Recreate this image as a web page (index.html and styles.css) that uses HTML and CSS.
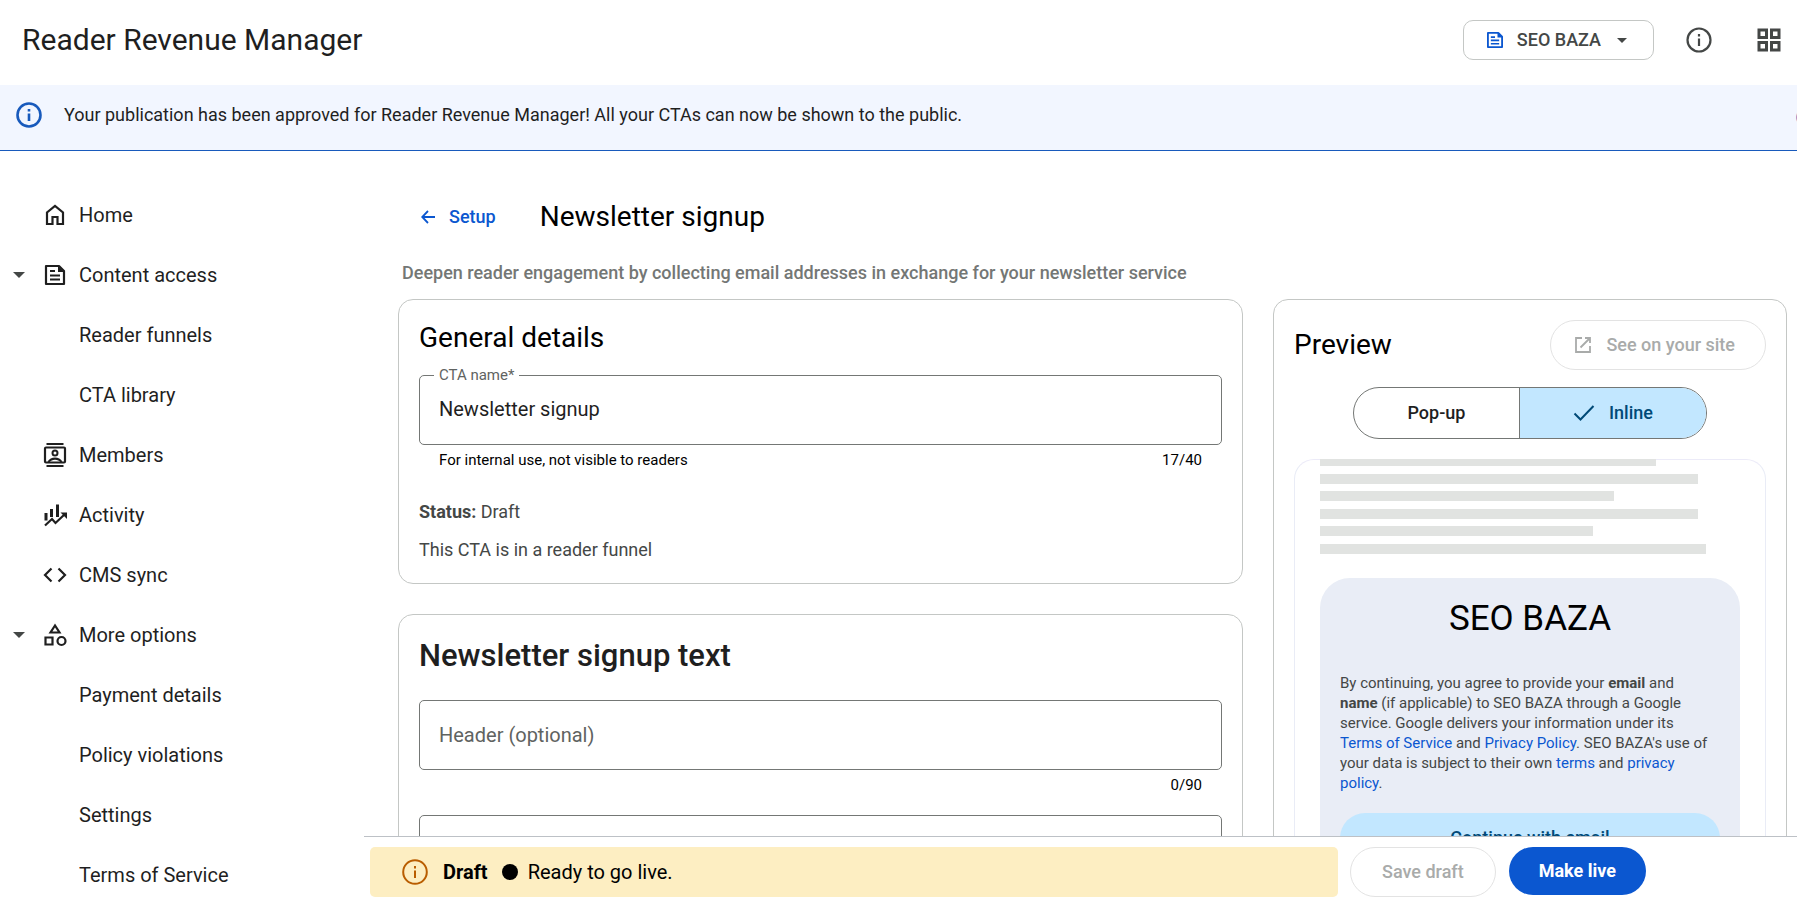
FILE: index.html
```html
<!DOCTYPE html>
<html lang="en">
<head>
<meta charset="utf-8">
<title>Reader Revenue Manager</title>
<link rel="stylesheet" href="styles.css">
</head>
<body>
<header class="topbar">
  <h1 class="topbar-title">Reader Revenue Manager</h1>
  <button class="picker" type="button">
    <svg class="icon-20 blue" viewBox="0 0 24 24"><path d="M3.500 3.500h12.500l4.500 4.500v12.500h-17z" fill="none" stroke="currentColor" stroke-width="2.200" stroke-linejoin="round"/><path d="M15 3v6h6z" fill="currentColor"/><path d="M7 8.500h5M7 12.500h10M7 16.500h10" stroke="currentColor" stroke-width="2"/></svg>
    <span>SEO BAZA</span>
    <svg class="caret-sm" viewBox="0 0 10 5"><path d="M0 0h10L5 5z" fill="currentColor"/></svg>
  </button>
  <button class="icon-button" type="button" aria-label="Information">
    <svg viewBox="0 0 26 26"><circle cx="13" cy="13" r="11.500" fill="none" stroke="currentColor" stroke-width="2.200"/><path d="M13 11.500v7.500M13 7v2.500" stroke="currentColor" stroke-width="2.200"/></svg>
  </button>
  <button class="icon-button" type="button" aria-label="Apps">
    <svg viewBox="0 0 26 26"><path d="M3 3h7.500v7.500H3zM15.500 3H23v7.500h-7.500zM3 15.500h7.500V23H3zM15.500 15.500H23V23h-7.500z" fill="none" stroke="currentColor" stroke-width="3"/></svg>
  </button>
</header>

<div class="banner">
  <svg class="icon-26 banner-icon" viewBox="0 0 26 26"><circle cx="13" cy="13" r="11.500" fill="none" stroke="currentColor" stroke-width="2.600"/><path d="M13 11.500v7.500M13 7v2.600" stroke="currentColor" stroke-width="2.600"/></svg>
  <p class="banner-text">Your publication has been approved for Reader Revenue Manager! All your CTAs can now be shown to the public.</p>
  <button class="banner-action" type="button">Got it</button>
</div>

<div class="body">
  <nav class="nav">
    <a class="nav-item" href="#">
      <span class="nav-caret"></span>
      <svg class="icon-24" viewBox="0 0 24 24"><path d="M4 21V9.500l8-6.500 8 6.500V21h-5.500v-7h-5v7z" fill="none" stroke="currentColor" stroke-width="2.200"/></svg>
      <span>Home</span>
    </a>
    <a class="nav-item" href="#">
      <span class="nav-caret"><svg class="caret" viewBox="0 0 12 6"><path d="M0 0h12L6 6z" fill="currentColor"/></svg></span>
      <svg class="icon-24" viewBox="0 0 24 24"><path d="M3 3h13l5 5v13H3z" fill="none" stroke="currentColor" stroke-width="2.200" stroke-linejoin="round"/><path d="M15 3v6h6z" fill="currentColor"/><path d="M7 8h5M7 12.500h10M7 16.500h10" stroke="currentColor" stroke-width="2"/></svg>
      <span>Content access</span>
    </a>
    <a class="nav-item nav-child" href="#">Reader funnels</a>
    <a class="nav-item nav-child" href="#">CTA library</a>
    <a class="nav-item" href="#">
      <span class="nav-caret"></span>
      <svg class="icon-24" viewBox="0 0 24 24"><path d="M3.500 1h17M3.500 23h17" stroke="currentColor" stroke-width="2"/><rect x="2" y="4.500" width="20" height="15" rx="1" fill="none" stroke="currentColor" stroke-width="2.200"/><circle cx="12" cy="10" r="2.500" fill="none" stroke="currentColor" stroke-width="2"/><path d="M5.500 19c3-4.500 10-4.500 13 0" fill="none" stroke="currentColor" stroke-width="2.200"/></svg>
      <span>Members</span>
    </a>
    <a class="nav-item" href="#">
      <span class="nav-caret"></span>
      <svg class="icon-24" viewBox="0 0 24 24"><path d="M3 10v7.500M8.500 6v8M14.500 1.500V14" stroke="currentColor" stroke-width="3"/><path d="M2 22.500l7-6.500 3.500 4L22 11" fill="none" stroke="currentColor" stroke-width="2.200"/><path d="M17.500 9.500H24V16z" fill="currentColor"/></svg>
      <span>Activity</span>
    </a>
    <a class="nav-item" href="#">
      <span class="nav-caret"></span>
      <svg class="icon-24" viewBox="0 0 24 24"><path d="M8.500 5.500L2 12l6.500 6.500M15.500 5.500L22 12l-6.500 6.500" fill="none" stroke="currentColor" stroke-width="2.200"/></svg>
      <span>CMS sync</span>
    </a>
    <a class="nav-item" href="#">
      <span class="nav-caret"><svg class="caret" viewBox="0 0 12 6"><path d="M0 0h12L6 6z" fill="currentColor"/></svg></span>
      <svg class="icon-24" viewBox="0 0 24 24"><path d="M12 2.500L7.500 9.500h9zM2.500 14.500h7v7h-7z" fill="none" stroke="currentColor" stroke-width="2.200"/><circle cx="18.500" cy="18" r="4" fill="none" stroke="currentColor" stroke-width="2.200"/></svg>
      <span>More options</span>
    </a>
    <a class="nav-item nav-child" href="#">Payment details</a>
    <a class="nav-item nav-child" href="#">Policy violations</a>
    <a class="nav-item nav-child" href="#">Settings</a>
    <a class="nav-item nav-child" href="#">Terms of Service</a>
  </nav>

  <div class="workspace">
    <main class="scroller">
      <div class="heading-row">
        <a class="back" href="#">
          <svg class="icon-14" viewBox="0 0 14 14"><path d="M7 1L1.200 7 7 13M1.500 7H14" fill="none" stroke="currentColor" stroke-width="1.800"/></svg>
          <span>Setup</span>
        </a>
        <h2 class="title">Newsletter signup</h2>
      </div>
      <p class="lead">Deepen reader engagement by collecting email addresses in exchange for your newsletter service</p>

      <div class="columns">
        <div class="stack">
          <section class="card">
            <h3 class="title">General details</h3>
            <div class="field">
              <label class="field-label" for="cta-name">CTA name*</label>
              <input class="input" id="cta-name" type="text" value="Newsletter signup">
            </div>
            <div class="helper"><span>For internal use, not visible to readers</span><span>17/40</span></div>
            <p class="note"><strong>Status:</strong> Draft</p>
            <p class="note">This CTA is in a reader funnel</p>
          </section>

          <section class="card card-text">
            <h3 class="title-strong">Newsletter signup text</h3>
            <input class="input" type="text" placeholder="Header (optional)" aria-label="Header (optional)">
            <div class="helper helper-end"><span>0/90</span></div>
            <textarea class="input input-area" aria-label="Message"></textarea>
          </section>
        </div>

        <section class="card preview">
          <div class="preview-head">
            <h3 class="title">Preview</h3>
            <button class="pill" type="button" disabled>
              <svg class="icon-18" viewBox="0 0 18 18"><path d="M8 2H2v14h14v-6M11 2h5v5M16 2L6.500 11.500" fill="none" stroke="currentColor" stroke-width="1.800"/></svg>
              <span>See on your site</span>
            </button>
          </div>
          <div class="segment">
            <button class="segment-item" type="button" aria-pressed="false">Pop-up</button>
            <button class="segment-item is-on" type="button" aria-pressed="true">
              <svg class="icon-22" viewBox="0 0 22 22"><path d="M1.500 11.500L7.500 17.500 20.500 4" fill="none" stroke="currentColor" stroke-width="2"/></svg>
              <span>Inline</span>
            </button>
          </div>
          <div class="frame">
            <div class="line line-first"></div>
            <div class="line line-long"></div>
            <div class="line line-mid"></div>
            <div class="line line-long"></div>
            <div class="line line-short"></div>
            <div class="line line-full"></div>
            <div class="prompt">
              <h4 class="prompt-title">SEO BAZA</h4>
              <p class="prompt-text">By continuing, you agree to provide your <strong>email</strong> and <strong>name</strong> (if applicable) to SEO BAZA through a Google service. Google delivers your information under its <a href="#">Terms of Service</a> and <a href="#">Privacy Policy</a>. SEO BAZA's use of your data is subject to their own <a href="#">terms</a> and <a href="#">privacy policy</a>.</p>
              <button class="prompt-button" type="button">Continue with email</button>
            </div>
          </div>
        </section>
      </div>
    </main>

    <footer class="footer">
      <div class="status">
        <svg class="icon-26 amber" viewBox="0 0 26 26"><circle cx="13" cy="13" r="11.800" fill="none" stroke="currentColor" stroke-width="2"/><path d="M13 11.500v7.500M13 7v2.500" stroke="currentColor" stroke-width="2"/></svg>
        <strong>Draft</strong>
        <span class="dot"></span>
        <span>Ready to go live.</span>
      </div>
      <button class="pill" type="button" disabled>Save draft</button>
      <button class="primary" type="button">Make live</button>
    </footer>
  </div>
</div>
</body>
</html>
```
FILE: styles.css
```css
* { box-sizing: border-box; }

body {
  margin: 0;
  height: 100vh;
  display: flex;
  flex-direction: column;
  overflow: hidden;
  background: #fff;
  color: #1f1f1f;
  font: 400 18px/24px Roboto, "Open Sans", sans-serif;
}

h1, h2, h3, h4, p { margin: 0; font-weight: 400; }
a { color: #0b57d0; text-decoration: none; }
button, input, textarea { font: inherit; color: inherit; margin: 0; }
button { background: none; border: 0; padding: 0; cursor: pointer; }
svg { display: block; flex: none; }
strong { font-weight: 700; }

.icon-14 { width: 14px; height: 14px; }
.icon-18 { width: 18px; height: 18px; }
.icon-20 { width: 20px; height: 20px; }
.icon-22 { width: 22px; height: 22px; }
.icon-24 { width: 24px; height: 24px; }
.icon-26 { width: 26px; height: 26px; }
.blue { color: #0b57d0; }
.amber { color: #b95d00; }

/* Top bar */
.topbar {
  flex: none;
  display: flex;
  align-items: center;
  padding: 20px 15px 25px 22px;
  color: #444746;
}
.topbar-title { flex: 1; font-size: 30px; line-height: 40px; color: #1f1f1f; }
.picker {
  display: flex;
  align-items: center;
  gap: 12px;
  height: 40px;
  padding: 0 26px 0 21px;
  border: 1px solid #c4c7c5;
  border-radius: 10px;
  font-weight: 500;
}
.caret-sm { width: 10px; height: 5px; margin-left: 4px; }
.icon-button { margin-left: 32px; }
.icon-button + .icon-button { margin-left: 44px; }
.icon-button svg { width: 26px; height: 26px; }

/* Banner */
.banner {
  flex: none;
  display: flex;
  align-items: center;
  padding: 15px 0 20px 16px;
  background: #f2f6ff;
  border-bottom: 1px solid #185abc;
  overflow: hidden;
}
.banner-icon { color: #185abc; }
.banner-text { flex: none; margin-left: 22px; }
.banner-action {
  flex: none;
  margin: 6px -42px 0 auto;
  color: #185abc;
  font-weight: 500;
}

/* Navigation */
.body { flex: 1; min-height: 0; display: flex; }
.nav { flex: none; width: 364px; padding-top: 34px; overflow: hidden; }
.nav-item {
  display: flex;
  align-items: center;
  height: 60px;
  font-size: 20px;
  color: #1f1f1f;
}
.nav-item svg + span { margin-left: 12px; }
.nav-caret { width: 43px; padding-left: 13px; color: #444746; }
.caret { width: 12px; height: 6px; }
.nav-child { padding-left: 79px; }

/* Workspace */
.workspace { flex: 1; min-width: 0; display: flex; flex-direction: column; }
.scroller { flex: 1; min-height: 0; overflow: hidden; padding: 46px 10px 0 34px; }
.heading-row { display: flex; align-items: center; padding-left: 23px; color: #000; }
.back { display: flex; align-items: center; gap: 14px; font-weight: 500; }
.heading-row .title { margin-left: 44px; }
.title { font-size: 28px; line-height: 40px; color: #000; }
.title-strong { font-size: 31px; line-height: 40px; font-weight: 500; }
.lead { margin-top: 24px; padding-left: 4px; color: #747775; font-weight: 500; }

.columns {
  display: grid;
  grid-template-columns: minmax(0, 845fr) minmax(0, 514fr);
  gap: 30px;
  margin-top: 14px;
}
.stack { display: flex; flex-direction: column; gap: 30px; }
.card { border: 1px solid #c4c7c5; border-radius: 15px; padding: 18px 20px 21px; }

.field { position: relative; margin-top: 17px; }
.field-label {
  position: absolute;
  top: -10px;
  left: 15px;
  padding: 0 5px;
  background: #fff;
  color: #5f6361;
  font-size: 15px;
  line-height: 20px;
}
.input {
  display: block;
  width: 100%;
  height: 70px;
  padding: 0 19px;
  border: 1px solid #747775;
  border-radius: 5px;
  background: #fff;
  font-size: 20px;
  outline: none;
}
.field .input { padding-bottom: 2px; }
.input::placeholder { color: #5f6361; opacity: 1; }
.input-area { height: 150px; resize: none; }
.helper {
  display: flex;
  justify-content: space-between;
  padding: 5px 20px 0;
  color: #000;
  font-size: 15px;
  line-height: 20px;
}
.helper-end { justify-content: flex-end; }
.note { margin-top: 14px; color: #444746; }
.helper + .note { margin-top: 30px; }
.card-text { padding-top: 21px; }
.card-text .title-strong { margin-bottom: 24px; }
.card-text .input-area { margin-top: 20px; }

/* Preview */
.preview { padding: 20px 20px 0; }
.preview-head { display: flex; align-items: center; justify-content: space-between; }
.pill {
  flex: none;
  display: flex;
  align-items: center;
  gap: 14px;
  height: 50px;
  padding: 0 30px 0 23px;
  border: 1px solid #e3e3e3;
  border-radius: 25px;
  color: #a9abaa;
  font-weight: 500;
}
.segment {
  display: flex;
  width: 75%;
  height: 52px;
  margin: 17px auto 20px;
  border: 1px solid #747775;
  border-radius: 26px;
  overflow: hidden;
  font-weight: 500;
}
.segment-item { flex: 47; }
.segment-item.is-on {
  flex: 53;
  display: flex;
  align-items: center;
  justify-content: center;
  gap: 14px;
  border-left: 1px solid #747775;
  background: #c2e7ff;
  color: #004a77;
}
.frame {
  padding: 0 25px;
  border: 1px solid #e9ecf6;
  border-top-color: #ecebf8;
  border-radius: 20px 20px 0 0;
}
.line { height: 10px; margin-bottom: 8px; background: #e1e3e1; }
.line-first { width: 80%; height: 7px; margin-top: -1px; }
.line-long { width: 90%; margin-bottom: 7px; }
.line-mid { width: 70%; }
.line-short { width: 65%; }
.line-full { width: 92%; margin-bottom: 24px; }
.prompt { padding: 16px 20px 30px; border-radius: 30px; background: #e9edf6; }
.prompt-title { color: #000; font-size: 35px; line-height: 50px; text-align: center; }
.prompt-text {
  margin: 29px 0 20px;
  padding-right: 10px;
  color: #444746;
  font-size: 15px;
  line-height: 20px;
}
.prompt-button {
  display: block;
  width: 100%;
  height: 50px;
  border-radius: 25px;
  background: #c2e7ff;
  color: #004a77;
  font-weight: 500;
}

/* Footer */
.footer {
  flex: none;
  display: flex;
  align-items: flex-start;
  padding: 10px 151px 5px 6px;
  border-top: 1px solid #bdc1c6;
}
.status {
  flex: 1;
  display: flex;
  align-items: center;
  height: 50px;
  padding-left: 32px;
  border-radius: 5px;
  background: #fdeec2;
  color: #000;
  font-size: 20px;
}
.status strong { margin-left: 15px; }
.dot { width: 16px; height: 16px; margin: 0 10px 0 14px; border-radius: 50%; background: #000; }
.footer .pill { margin-left: 12px; padding: 0 31px; }
.primary {
  height: 48px;
  margin-left: 13px;
  padding: 0 30px;
  border-radius: 24px;
  background: #0b57d0;
  color: #fff;
  font-weight: 700;
}
```
